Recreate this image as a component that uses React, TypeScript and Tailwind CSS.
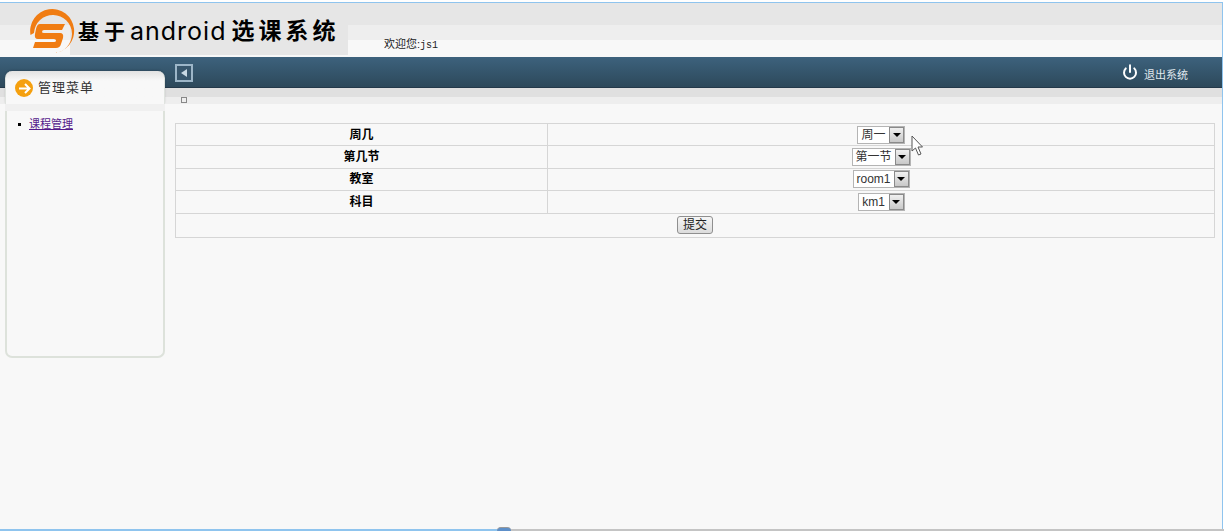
import React from "react";
import { Power } from "lucide-react";

const rows = [
  { label: "周几", value: "周一", w: "w-[48px]" },
  { label: "第几节", value: "第一节", w: "w-[59px]" },
  { label: "教室", value: "room1", w: "w-[57px]" },
  { label: "科目", value: "km1", w: "w-[47px]" },
];

const FakeSelect = ({ value, w }: { value: string; w: string }) => (
  <div className={`${w} h-[18px] flex items-center border border-[#b4b4b4] bg-white`}>
    <span className="flex-1 text-center text-[12px] leading-none text-[#333] whitespace-nowrap">{value}</span>
    <span className="w-[15px] h-[16px] flex items-center justify-center border border-[#8a8a8a] bg-gradient-to-b from-[#f0f0f0] to-[#c8c8c8]">
      <span className="w-0 h-0 border-x-[4px] border-x-transparent border-t-[4px] border-t-black" />
    </span>
  </div>
);

const App: React.FC = () => {
  return (
    <div className="relative w-[1224px] h-[531px] overflow-hidden bg-white font-['Liberation_Sans','Noto_Sans_CJK_SC',sans-serif]">
      <div className="h-[2px]" />
      <div className="w-[1223px] h-[527px] flex flex-col border-t border-r border-[#8fc4ee] bg-[#f8f8f8]">
        {/* header */}
        <div className="h-[54px] flex flex-col relative">
          <div className="h-[22px] bg-[#e6e6e6]" />
          <div className="h-[15px] bg-[#eeeeee]" />
          <div className="h-[17px] bg-[#f8f8f8]" />
          <div className="absolute left-0 top-0 h-[52px] w-[348px] flex items-center">
            <div className="absolute left-[70px] top-[22px] w-[278px] h-[30px] bg-[#e6e6e6]" />
            <svg className="absolute left-[30px] top-[4px]" width="46" height="48" viewBox="0 0 46 48">
              <path d="M0.5 28A22 22 0 1 1 24 46A19 19 0 1 0 4 26z" fill="#f07c12" />
              <path d="M10 17H35L32 23H14Q12 23 12 25Q12 26 14 26H30Q34 26 33 31L31 37Q30 41 26 41H3L5 35H24Q26 35 26 33.5Q26 32 24 32H8Q4 32 5 27L6 22Q7 17 10 17z" fill="#f07c12" />
            </svg>
            <div className="relative ml-[78px] mt-[5px] flex items-center whitespace-nowrap text-black">
              <span className="text-[21px] font-bold tracking-[5px] leading-none">基于</span>
              <span className="text-[25px] leading-none font-['Inter',sans-serif] tracking-[1px] mr-[5px]">android</span>
              <span className="text-[23px] font-bold tracking-[4px] leading-none">选课系统</span>
            </div>
          </div>
          <div className="absolute left-[384px] top-[35px] text-[11px] leading-[12px] text-[#222]">
            欢迎您:<span className="font-['Liberation_Mono',monospace] text-[10px]">js1</span>
          </div>
        </div>

        {/* dark bar */}
        <div className="h-[31px] shrink-0 flex items-start bg-gradient-to-b from-[#3d627d] to-[#2d495b] border-b border-[#24394a]">
          <div className="ml-[175px] mt-[7px] w-[18px] h-[18px] flex items-center justify-center bg-[#38566c] border-[2px] border-[#9db6c8]">
            <span className="w-0 h-0 border-y-[4px] border-y-transparent border-r-[6px] border-r-[#c9d8e3]" />
          </div>
          <div className="ml-auto mr-[34px] mt-[7px] flex items-start text-white">
            <Power size={16} strokeWidth={3} />
            <span className="ml-[6px] mt-[4px] text-[11px] leading-[14px] text-[#e0e8ee]">退出系统</span>
          </div>
        </div>

        {/* strip under the bar */}
        <div className="h-[16px] shrink-0 flex flex-col relative">
          <div className="h-[9px] bg-[#e0e0e0]" />
          <div className="h-[7px] bg-[#eeeeee]" />
          <div className="absolute left-[181px] top-[9px] w-[6px] h-[6px] border border-[#888] bg-[#eee]" />
        </div>

        {/* main */}
        <div className="flex flex-1">
          <div className="w-[175px] shrink-0 pl-[5px]">
            <div className="relative -mt-[33px] w-[160px] h-[287px] flex flex-col">
              <div className="h-[33px] flex items-center pl-[9px] pt-[1px] bg-gradient-to-b from-[#e2e2e2] via-[#f8f8f8] via-30% to-[#f8f8f8] rounded-t-[7px] border-x border-[#dfe3df] shadow-[0_-1px_2px_rgba(0,0,0,0.15)]">
                <span className="w-[18px] h-[18px] rounded-full bg-[#f5a00f] flex items-center justify-center">
                  <svg width="13" height="11" viewBox="0 0 13 11" fill="none" stroke="#fff" strokeWidth="2">
                    <path d="M1 5.5h10M7 1l4.5 4.5L7 10" />
                  </svg>
                </span>
                <span className="ml-[5px] text-[13px] tracking-[1px] text-[#333]">管理菜单</span>
              </div>
              <div className="h-[7px] bg-[#f0f0f0]" />
              <div className="flex-1 bg-[#f8f8f8] border-x-2 border-b-2 border-[#dde2db] rounded-b-[7px] pl-[11px] pt-[6px]">
                <div className="flex items-center text-[11px] leading-[14px]">
                  <span className="w-[3px] h-[3px] bg-black mr-[8px]" />
                  <a href="#" className="text-[#551a8b] underline">课程管理</a>
                </div>
              </div>
            </div>
          </div>

          <div className="flex-1 pt-[19px] pr-[7px]">
            <div className="border border-[#d6d6d6]">
              {rows.map((r) => (
                <div key={r.label} className="h-[22.4px] flex border-b border-[#d6d6d6]">
                  <div className="w-[372px] shrink-0 flex items-center justify-center border-r border-[#d6d6d6] text-[12px] font-bold text-black">
                    {r.label}
                  </div>
                  <div className="flex-1 flex items-center justify-center">
                    <FakeSelect value={r.value} w={r.w} />
                  </div>
                </div>
              ))}
              <div className="h-[23px] flex items-center justify-center">
                <button className="w-[36px] h-[18px] flex items-center justify-center rounded-[3px] border border-[#8f8f8f] bg-gradient-to-b from-[#f6f6f6] to-[#dcdcdc] text-[12px] leading-none text-[#222]">
                  提交
                </button>
              </div>
            </div>
          </div>
        </div>
      </div>

      {/* bottom edge of the window */}
      <div className="absolute left-0 bottom-0 w-[497px] h-[2px] bg-[#8fc4ee]" />
      <div className="absolute left-[497px] bottom-0 w-[727px] h-[2px] bg-[#c4c4c4]" />
      <div className="absolute left-[497px] bottom-0 w-[14px] h-[4px] rounded-t-[4px] bg-[#5d8fc9] border-t border-[#999]" />

      {/* mouse pointer */}
      <svg className="absolute left-[911px] top-[135px]" width="13" height="22" viewBox="0 0 13 22">
        <path d="M1 1v15l3.5-3 3 7 2.5-1-3-7h4.5z" fill="#fff" stroke="#555" strokeWidth="1" />
      </svg>
    </div>
  );
};

export default App;
